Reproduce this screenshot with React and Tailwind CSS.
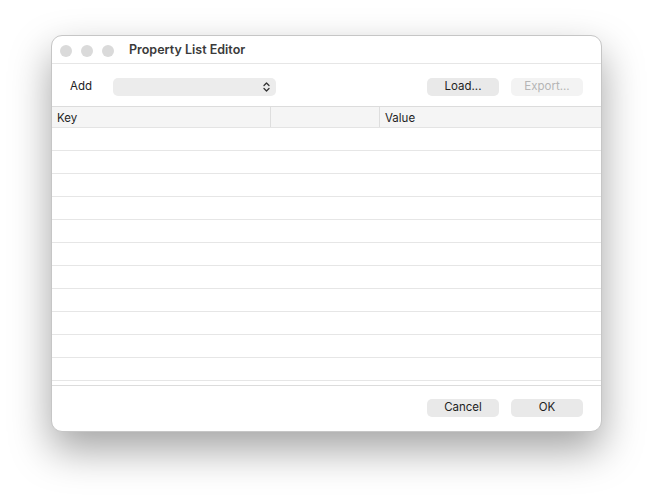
import React from 'react';

const rows = Array.from({ length: 11 });

const Button = ({ children, disabled }) => (
  <button
    className={
      disabled
        ? 'w-[72px] h-[18px] rounded-[5px] bg-[#f3f3f3] text-[#b5b5b5] text-[11.5px] leading-none'
        : 'w-[72px] h-[18px] rounded-[5px] bg-[#e9e9e9] text-[#1e1e1e] text-[11.5px] leading-none'
    }
  >
    {children}
  </button>
);

const PropertyListEditor = () => {
  return (
    <div className="min-h-[500px] bg-white pt-[35px] pl-[51px] font-['Inter','Liberation_Sans',sans-serif]">
      <div className="w-[551px] h-[397px] rounded-[11px] bg-white border border-[#c6c6c6] shadow-[0_18px_40px_rgba(0,0,0,0.36)] flex flex-col overflow-hidden">
        {/* title bar */}
        <div className="h-[28px] flex items-center pl-[8px] pt-[2px] border-b border-[#e6e6e6]">
          <div className="flex gap-[9px]">
            <span className="w-[12px] h-[12px] rounded-full bg-[#dadada]" />
            <span className="w-[12px] h-[12px] rounded-full bg-[#dadada]" />
            <span className="w-[12px] h-[12px] rounded-full bg-[#dadada]" />
          </div>
          <span className="ml-[15px] text-[12.5px] font-semibold text-[#3a3a3a]">Property List Editor</span>
        </div>

        {/* toolbar */}
        <div className="h-[42px] flex items-center px-[18px] pt-[4px]">
          <span className="text-[11.5px] text-[#222] w-[43px]">Add</span>
          <div className="w-[163px] h-[18px] rounded-[5px] bg-[#ececec] flex items-center justify-end pr-[6px]">
            <svg width="7" height="10" viewBox="0 0 7 10" fill="none" stroke="#333" strokeWidth="1.3" strokeLinecap="round" strokeLinejoin="round">
              <path d="M1 3.5 L3.5 1 L6 3.5" />
              <path d="M1 6.5 L3.5 9 L6 6.5" />
            </svg>
          </div>
          <div className="ml-auto flex gap-[12px]">
            <Button>Load...</Button>
            <Button disabled>Export...</Button>
          </div>
        </div>

        {/* table */}
        <div className="border-y border-[#dcdcdc]">
          <div className="h-[21px] flex bg-[#f5f5f5] border-b border-[#e4e4e4] text-[11.5px] text-[#1e1e1e]">
            <div className="w-[219px] pl-[5px] pt-[3px] flex items-center border-r border-[#dedede]">Key</div>
            <div className="w-[109px] border-r border-[#dedede]" />
            <div className="flex-1 pl-[5px] pt-[3px] flex items-center">Value</div>
          </div>
          {rows.map((_, idx) => (
            <div key={idx} className="h-[23px] border-b border-[#e6e6e6]" />
          ))}
          <div className="h-[4px]" />
        </div>

        {/* footer */}
        <div className="flex-1 flex items-center justify-end gap-[12px] pr-[18px] pb-[2px]">
          <Button>Cancel</Button>
          <Button>OK</Button>
        </div>
      </div>
    </div>
  );
};

export default PropertyListEditor;
